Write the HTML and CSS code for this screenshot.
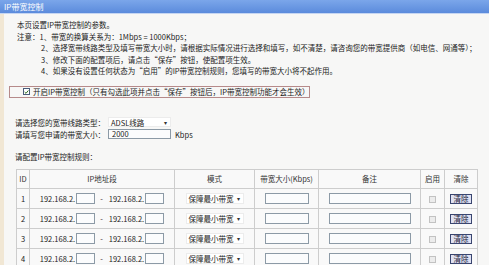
FILE: index.html
```html
<!DOCTYPE html>
<html lang="zh-CN">
<head>
  <meta charset="UTF-8">
  <title>IP带宽控制</title>
  <link rel="stylesheet" href="styles.css">
</head>
<body>
  <div class="titlebar">IP带宽控制</div>

  <div class="page">
    <div class="intro">
      <p>本页设置IP带宽控制的参数。</p>
      <p>注意：1、带宽的换算关系为：1Mbps = 1000Kbps；</p>
      <p class="indent">2、选择宽带线路类型及填写带宽大小时，请根据实际情况进行选择和填写，如不清楚，请咨询您的带宽提供商（如电信、网通等）；</p>
      <p class="indent">3、修改下面的配置项后，请点击“保存”按钮，使配置项生效。</p>
      <p class="indent">4、如果没有设置任何状态为“启用”的IP带宽控制规则，您填写的带宽大小将不起作用。</p>
    </div>

    <div class="enable-box">
      <span class="check checked">
        <svg width="6" height="6" viewBox="0 0 6 6"><path d="M0.8 3 L2.4 4.6 L5.2 1.2" fill="none" stroke="#2d6e1e" stroke-width="1.2"/></svg>
      </span>
      <span>开启IP带宽控制（只有勾选此项并点击“保存”按钮后，IP带宽控制功能才会生效）</span>
    </div>

    <div class="form">
      <div class="form-row">
        <span class="form-label">请选择您的宽带线路类型：</span>
        <div class="select line-type"><span>ADSL线路</span><span class="arrow">▾</span></div>
      </div>
      <div class="form-row">
        <span class="form-label">请填写您申请的带宽大小：</span>
        <div class="input line-type">2000</div>
        <span class="unit">Kbps</span>
      </div>
    </div>

    <p class="rules-title">请配置IP带宽控制规则：</p>

    <table class="rules">
      <colgroup>
        <col style="width:13px">
        <col style="width:145px">
        <col style="width:80px">
        <col style="width:64px">
        <col style="width:102px">
        <col style="width:24px">
        <col style="width:33px">
      </colgroup>
      <thead>
        <tr>
          <th>ID</th>
          <th>IP地址段</th>
          <th>模式</th>
          <th>带宽大小(Kbps)</th>
          <th>备注</th>
          <th>启用</th>
          <th>清除</th>
        </tr>
      </thead>
      <tbody id="rows"></tbody>
    </table>
  </div>

  <script>
    // 4 条规则行
    var tbody = document.getElementById('rows');
    for (var i = 1; i <= 4; i++) {
      var tr = document.createElement('tr');
      tr.innerHTML =
        '<td>' + i + '</td>' +
        '<td><span class="ip">192.168.2.<span class="input ip-box"></span><span class="dash">-</span>192.168.2.<span class="input ip-box"></span></span></td>' +
        '<td><div class="select mode"><span>保障最小带宽</span><span class="arrow">▾</span></div></td>' +
        '<td><span class="input bw"></span></td>' +
        '<td><span class="input remark"></span></td>' +
        '<td><span class="check off"></span></td>' +
        '<td><span class="btn-clear">清除</span></td>';
      tbody.appendChild(tr);
    }
  </script>
</body>
</html>
```

FILE: styles.css
```css
body {
  margin: 0;
  background-color: #f7f7f6;
  font-family: "Noto Sans CJK SC", "Liberation Sans", sans-serif;
  font-size: 7.5px;
  color: #222;
  overflow: hidden;
}

.titlebar {
  height: 13px;
  line-height: 13px;
  padding-left: 4px;
  font-size: 8px;
  color: #fff;
  background: linear-gradient(#7ba6ea, #5b8bdc);
  border-bottom: 1px solid #c6d6f2;
}

.page {
  border-left: 4px solid #f1e7d4;
  padding: 5px 0 0 0;
}

.intro {
  padding-left: 13px;
}

.intro p {
  margin: 0;
  line-height: 11.5px;
  white-space: nowrap;
}

.intro .indent {
  padding-left: 24px;
}

.enable-box {
  display: flex;
  align-items: center;
  gap: 3px;
  width: 286px;
  height: 10px;
  margin: 9px 0 0 5px;
  padding-left: 13px;
  border: 1px solid #b68a8a;
  white-space: nowrap;
}

.check {
  display: inline-flex;
  align-items: center;
  justify-content: center;
  width: 7px;
  height: 7px;
  box-sizing: border-box;
  vertical-align: middle;
}

.check.checked {
  border: 1px solid #4a5d7a;
  background-color: #fff;
}

.check.off {
  border: 1px solid #c2c2c2;
  background-color: #ececec;
}

.form {
  display: flex;
  flex-direction: column;
  gap: 1px;
  margin: 19px 0 0 11px;
}

.form-row {
  display: flex;
  align-items: center;
  height: 11px;
}

.form-label {
  width: 93px;
}

.select {
  display: flex;
  align-items: center;
  justify-content: space-between;
  box-sizing: border-box;
  height: 10px;
  padding: 0 3px 0 2px;
  background-color: #fff;
  border: 1px solid #ececec;
}

.select .arrow {
  font-size: 6px;
  color: #333;
}

.input {
  display: inline-block;
  box-sizing: border-box;
  height: 10px;
  background-color: #fbfcfd;
  border: 1px solid #8c9aa6;
  vertical-align: middle;
}

.line-type {
  width: 63px;
}

.form .input {
  padding-left: 3px;
  line-height: 8px;
}

.unit {
  margin-left: 4px;
}

.rules-title {
  margin: 11px 0 0 11px;
  line-height: 12px;
}

.rules {
  table-layout: fixed;
  border-collapse: collapse;
  width: 461px;
  margin: 6px 0 0 12px;
  background-color: #f9f9f9;
}

.rules th,
.rules td {
  border: 1px solid #cdcdcd;
  padding: 0;
  text-align: center;
  font-weight: normal;
  white-space: nowrap;
}

.rules th {
  height: 18px;
  color: #333;
}

.rules td {
  height: 19px;
}

.ip {
  display: inline-flex;
  align-items: center;
}

.ip-box {
  width: 19px;
  height: 11px;
  margin-left: 1px;
}

.dash {
  margin: 0 6px 0 5px;
}

.mode {
  width: 58px;
  height: 11px;
  margin: 0 auto;
}

.bw {
  width: 44px;
  height: 11px;
}

.remark {
  width: 82px;
  height: 11px;
}

.btn-clear {
  display: inline-block;
  width: 22px;
  height: 10px;
  line-height: 8px;
  box-sizing: border-box;
  border: 1px solid #3a4670;
  background-color: #dfe1f2;
  color: #1c1c3a;
  vertical-align: middle;
}
```
